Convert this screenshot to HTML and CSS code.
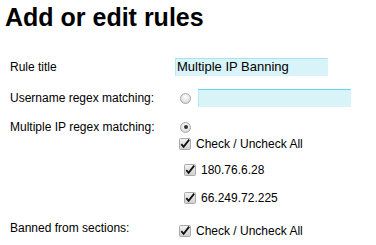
FILE: index.html
```html
<!DOCTYPE html>
<html>
<head>
<meta charset="utf-8">
<link rel="stylesheet" href="styles.css">
</head>
<body>
<div class="page">
  <h1 class="title">Add or edit rules</h1>
  <div class="form">
    <div class="label row1">Rule title</div>
    <div class="value row1">
      <span class="field field-title">Multiple IP Banning</span>
    </div>

    <div class="label row2">Username regex matching:</div>
    <div class="value row2">
      <span class="radio"></span>
      <span class="field field-regex"></span>
    </div>

    <div class="label row3">Multiple IP regex matching:</div>
    <div class="value stack">
      <div class="line line-radio"><span class="radio checked"></span></div>
      <div class="line line-all">
        <svg class="cb" width="12" height="12" viewBox="0 0 12 12"><defs><linearGradient id="g1" x1="0" y1="0" x2="0" y2="1"><stop offset="0" stop-color="#f4f4f4"/><stop offset="1" stop-color="#cfcfcf"/></linearGradient></defs><rect x="0.5" y="0.5" width="11" height="11" rx="1" fill="url(#g1)" stroke="#a9a9a9"/><path d="M2.3 6.2 L4.6 8.8 L10.2 1.6" fill="none" stroke="#111" stroke-width="1.8"/></svg>
        <span class="cbtext">Check / Uncheck All</span>
      </div>
      <div class="line line-ip first-ip">
        <svg class="cb" width="12" height="12" viewBox="0 0 12 12"><rect x="0.5" y="0.5" width="11" height="11" rx="1" fill="url(#g1)" stroke="#a9a9a9"/><path d="M2.3 6.2 L4.6 8.8 L10.2 1.6" fill="none" stroke="#111" stroke-width="1.8"/></svg>
        <span class="cbtext">180.76.6.28</span>
      </div>
      <div class="line line-ip">
        <svg class="cb" width="12" height="12" viewBox="0 0 12 12"><rect x="0.5" y="0.5" width="11" height="11" rx="1" fill="url(#g1)" stroke="#a9a9a9"/><path d="M2.3 6.2 L4.6 8.8 L10.2 1.6" fill="none" stroke="#111" stroke-width="1.8"/></svg>
        <span class="cbtext">66.249.72.225</span>
      </div>
    </div>

    <div class="label row4">Banned from sections:</div>
    <div class="value row4">
      <div class="line line-all">
        <svg class="cb" width="12" height="12" viewBox="0 0 12 12"><rect x="0.5" y="0.5" width="11" height="11" rx="1" fill="url(#g1)" stroke="#a9a9a9"/><path d="M2.3 6.2 L4.6 8.8 L10.2 1.6" fill="none" stroke="#111" stroke-width="1.8"/></svg>
        <span class="cbtext">Check / Uncheck All</span>
      </div>
    </div>
  </div>
</div>
</body>
</html>
```

FILE: styles.css
```css
html, body {
  margin: 0;
  padding: 0;
  background: #ffffff;
}
body {
  font-family: "Liberation Sans", Arial, sans-serif;
  color: #000;
  font-size: 12px;
}
.page {
  padding: 3px 0 0 5px;
}
.title {
  margin: 0;
  font-size: 25px;
  line-height: 29px;
  font-weight: bold;
}
.form {
  margin-top: 23px;
  margin-left: 5px;
  display: grid;
  grid-template-columns: 165px 1fr;
  align-items: start;
}
.label {
  line-height: 14px;
}
.value {
  display: flex;
  align-items: center;
}
.row1 { height: 24px; display: flex; align-items: center; }
.row2 { height: 24px; display: flex; align-items: center; margin-top: 7px; }
.row3 { margin-top: 10px; }
.row4 { margin-top: 16px; }
.field {
  display: inline-block;
  box-sizing: border-box;
  background: #d8f4f9;
  border: 1px solid #d8f4f9;
  border-top-color: #a6e4ef;
  border-left-color: #b5e9f2;
  font-size: 13px;
  line-height: 16px;
  padding: 0 1px;
}
.field-title { width: 153px; height: 18px; }
.field-regex { width: 153px; height: 18px; margin-left: 7px; border-top-color: #62d5ea; }
.radio {
  display: inline-block;
  box-sizing: border-box;
  width: 11px;
  height: 11px;
  margin-left: 5px;
  border-radius: 50%;
  border: 1px solid #a8a8a8;
  background: radial-gradient(circle at 50% 35%, #ffffff 0%, #e6e6e6 55%, #c8c8c8 100%);
  position: relative;
}
.radio.checked::after {
  content: "";
  position: absolute;
  left: 2.5px;
  top: 2.5px;
  width: 4px;
  height: 4px;
  border-radius: 50%;
  background: #333;
}
.stack {
  display: flex;
  flex-direction: column;
  align-items: flex-start;
  margin-top: 10px;
}
.line {
  display: flex;
  align-items: center;
  height: 14px;
}
.line-radio { height: 14px; }
.line-all { margin-left: 4px; margin-top: 3px; }
.stack .line-ip { margin-left: 9px; margin-top: 14px; }
.stack .first-ip { margin-top: 12px; }
.cb { display: block; flex: none; }
.cbtext { margin-left: 5px; }
```
